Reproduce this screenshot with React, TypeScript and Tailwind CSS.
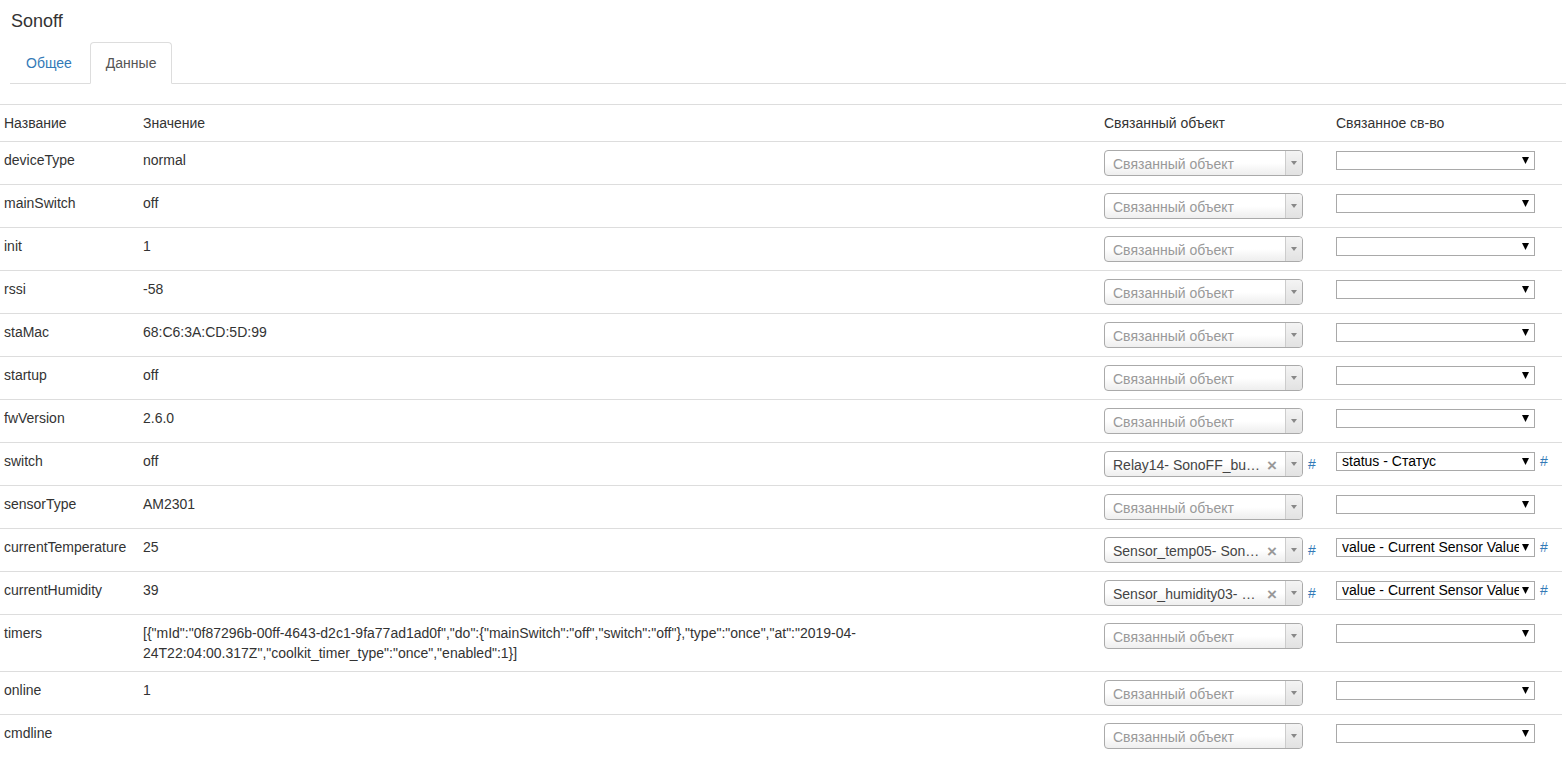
import React from "react";

interface Row {
  name: string;
  value: string;
  linkedObject?: string;
  linkedProp?: string;
}

const ROWS: Row[] = [
  { name: "deviceType", value: "normal" },
  { name: "mainSwitch", value: "off" },
  { name: "init", value: "1" },
  { name: "rssi", value: "-58" },
  { name: "staMac", value: "68:C6:3A:CD:5D:99" },
  { name: "startup", value: "off" },
  { name: "fwVersion", value: "2.6.0" },
  { name: "switch", value: "off", linkedObject: "Relay14- SonoFF_bu…", linkedProp: "status - Статус" },
  { name: "sensorType", value: "AM2301" },
  {
    name: "currentTemperature",
    value: "25",
    linkedObject: "Sensor_temp05- Son…",
    linkedProp: "value - Current Sensor Value",
  },
  {
    name: "currentHumidity",
    value: "39",
    linkedObject: "Sensor_humidity03- …",
    linkedProp: "value - Current Sensor Value",
  },
  {
    name: "timers",
    value:
      '[{"mId":"0f87296b-00ff-4643-d2c1-9fa77ad1ad0f","do":{"mainSwitch":"off","switch":"off"},"type":"once","at":"2019-04-24T22:04:00.317Z","coolkit_timer_type":"once","enabled":1}]',
  },
  { name: "online", value: "1" },
  { name: "cmdline", value: "" },
];

function ObjectPicker({ value }: { value?: string }) {
  return (
    <div className="relative inline-block align-top w-[199px] h-[26px] rounded-[4px] border border-[#aaa] bg-gradient-to-b from-white from-50% to-[#eee] leading-[24px]">
      <span
        className={`block pt-px pl-[8px] whitespace-nowrap overflow-hidden ${
          value ? "text-[#444]" : "text-[#999]"
        }`}
      >
        {value || "Связанный объект"}
      </span>
      {value && (
        <span className="absolute right-[25px] top-[2px] text-[17px] font-bold text-[#999]">×</span>
      )}
      <span className="absolute right-0 top-0 bottom-0 w-[17px] border-l border-[#ccc] rounded-r-[4px] bg-gradient-to-b from-[#f4f4f4] to-[#e2e2e2] flex items-center justify-center">
        <svg width="6" height="4" viewBox="0 0 6 4">
          <path d="M0 0h6L3 4z" fill="#888" />
        </svg>
      </span>
    </div>
  );
}

function PropSelect({ value }: { value?: string }) {
  return (
    <div className="relative inline-block align-top mt-px w-[199px] h-[19px] border border-[#a9a9a9] bg-white leading-[17px] text-black">
      <span className="block ml-[5px] w-[177px] whitespace-nowrap overflow-hidden">{value || "\u00a0"}</span>
      <svg className="absolute right-[5px] top-[5px]" width="7" height="7" viewBox="0 0 7 7">
        <path d="M0 0h7L3.5 7z" fill="#000" />
      </svg>
    </div>
  );
}

export default function App() {
  return (
    <div className="min-h-screen bg-white text-[14px] leading-[20px] text-[#333] font-['Liberation_Sans',Arial,sans-serif]">
      <div className="pl-[11px] pt-[11px] text-[18px] leading-[20px]">Sonoff</div>

      <ul className="mt-[11px] ml-[10px] flex border-b border-[#ddd]">
        <li className="mr-[2px] -mb-px">
          <a className="block px-[15px] py-[10px] border border-transparent text-[#337ab7]">Общее</a>
        </li>
        <li className="-mb-px">
          <a className="block px-[15px] py-[10px] border border-[#ddd] border-b-white bg-white rounded-t-[4px] text-[#555]">
            Данные
          </a>
        </li>
      </ul>

      <table className="mt-[20px] w-[1562px] table-fixed border-collapse">
        <colgroup>
          <col className="w-[139px]" />
          <col className="w-[961px]" />
          <col className="w-[232px]" />
          <col className="w-[230px]" />
        </colgroup>
        <thead>
          <tr className="border-t border-[#ddd]">
            <th className="px-[4px] py-[8px] text-left font-normal">Название</th>
            <th className="px-[4px] py-[8px] text-left font-normal">Значение</th>
            <th className="px-[4px] py-[8px] text-left font-normal">Связанный объект</th>
            <th className="px-[4px] py-[8px] text-left font-normal">Связанное св-во</th>
          </tr>
        </thead>
        <tbody>
          {ROWS.map((r) => (
            <tr key={r.name} className="border-t border-[#ddd] align-top">
              <td className="px-[4px] py-[8px]">{r.name}</td>
              <td className="px-[4px] py-[8px] break-words">{r.value}</td>
              <td className="px-[4px] py-[8px] whitespace-nowrap">
                <ObjectPicker value={r.linkedObject} />
                {r.linkedObject && <a className="ml-[5px] text-[#337ab7] leading-[26px]">#</a>}
              </td>
              <td className="px-[4px] py-[8px] whitespace-nowrap">
                <PropSelect value={r.linkedProp} />
                {r.linkedProp && <a className="ml-[5px] text-[#337ab7]">#</a>}
              </td>
            </tr>
          ))}
        </tbody>
      </table>
    </div>
  );
}
